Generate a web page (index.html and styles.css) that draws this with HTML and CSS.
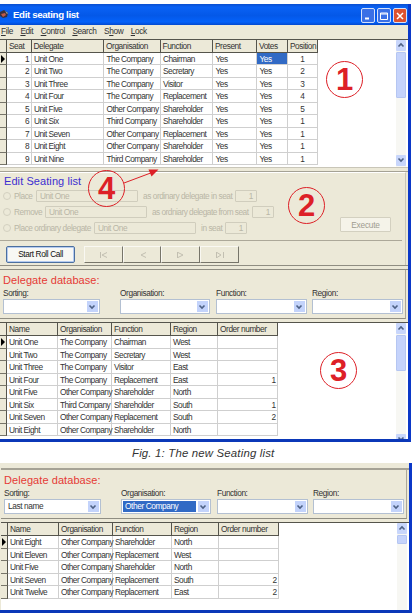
FILE: index.html
```html
<!DOCTYPE html>
<html lang="en">
<head>
    <meta charset="UTF-8">
    <meta name="viewport" content="width=device-width, initial-scale=1.0">
    <title>Edit seating list</title>
    <link rel="stylesheet" href="styles.css">
</head>
<body>
    <div class="window main-window">
        <div class="titlebar">
            <svg class="app-icon" width="10" height="11" viewBox="0 0 10 11">
                <path d="M0 3L4 1L8 4L7 8L3 9L0 7Z" fill="#39303c"/>
                <path d="M1 5L5 4L6 6L3 8Z" fill="#c05a4a"/>
                <path d="M5 2L8 4L7 5Z" fill="#a9b4a0"/>
            </svg>
            <span class="title">Edit seating list</span>
            <div class="win-buttons">
                <span class="win-btn"><svg width="12" height="12"><path d="M3 8.5H7" stroke="#fff" stroke-width="2"/></svg></span>
                <span class="win-btn"><svg width="12" height="12"><path d="M2.5 3H9.5V9.5H2.5ZM2.5 4H9.5" stroke="#fff" fill="none"/></svg></span>
                <span class="win-btn close"><svg width="12" height="12"><path d="M3 3L9 9M9 3L3 9" stroke="#fff" stroke-width="1.5"/></svg></span>
            </div>
        </div>
        <div class="menubar">
            <span><u>F</u>ile</span>
            <span><u>E</u>dit</span>
            <span><u>C</u>ontrol</span>
            <span><u>S</u>earch</span>
            <span>S<u>h</u>ow</span>
            <span><u>L</u>ock</span>
        </div>

        <div class="grid-area seats-area">
            <div class="grid seats">
                <b></b><b>Seat</b><b>Delegate</b><b>Organisation</b><b>Function</b><b>Present</b><b>Votes</b><b>Position</b>
                <i class="current"></i><span>1</span><span>Unit One</span><span>The Company</span><span>Chairman</span><span>Yes</span><span class="selected">Yes</span><span>1</span>
                <i></i><span>2</span><span>Unit Two</span><span>The Company</span><span>Secretary</span><span>Yes</span><span>Yes</span><span>2</span>
                <i></i><span>3</span><span>Unit Three</span><span>The Company</span><span>Visitor</span><span>Yes</span><span>Yes</span><span>3</span>
                <i></i><span>4</span><span>Unit Four</span><span>The Company</span><span>Replacement</span><span>Yes</span><span>Yes</span><span>4</span>
                <i></i><span>5</span><span>Unit Five</span><span>Other Company</span><span>Shareholder</span><span>Yes</span><span>Yes</span><span>5</span>
                <i></i><span>6</span><span>Unit Six</span><span>Third Company</span><span>Shareholder</span><span>Yes</span><span>Yes</span><span>1</span>
                <i></i><span>7</span><span>Unit Seven</span><span>Other Company</span><span>Replacement</span><span>Yes</span><span>Yes</span><span>1</span>
                <i></i><span>8</span><span>Unit Eight</span><span>Other Company</span><span>Shareholder</span><span>Yes</span><span>Yes</span><span>1</span>
                <i></i><span>9</span><span>Unit Nine</span><span>Third Company</span><span>Shareholder</span><span>Yes</span><span>Yes</span><span>1</span>
            </div>
            <div class="scrollbar">
                <span class="arrow"><svg width="10" height="10"><path d="M2.5 6.5L5 4L7.5 6.5" stroke="#4d6185" stroke-width="1.6" fill="none"/></svg></span>
                <span class="thumb seats-thumb"></span>
                <span class="arrow bottom"><svg width="10" height="10"><path d="M2.5 3.5L5 6L7.5 3.5" stroke="#4d6185" stroke-width="1.6" fill="none"/></svg></span>
            </div>
        </div>

        <div class="splitter"></div>

        <div class="edit-panel">
            <h2>Edit Seating list</h2>
            <div class="form-row">
                <span class="radio"></span>
                <span class="w-place">Place</span>
                <span class="field">Unit One</span>
                <span class="w-in">as ordinary delegate in seat</span>
                <span class="field num">1</span>
            </div>
            <div class="form-row">
                <span class="radio"></span>
                <span class="w-remove">Remove</span>
                <span class="field">Unit One</span>
                <span class="w-from">as ordniary delegate from seat</span>
                <span class="field num">1</span>
            </div>
            <div class="form-row">
                <span class="radio"></span>
                <span class="w-ordinary">Place ordinary delegate</span>
                <span class="field">Unit One</span>
                <span class="w-seat">in seat</span>
                <span class="field num">1</span>
                <span class="execute">Execute</span>
            </div>
            <div class="actions">
                <span class="start">Start Roll Call</span>
                <span class="nav"><svg width="10" height="8"><path d="M1.5 1V7M8 1.5L3 4L8 6.5" stroke="#c2bfb1" fill="none"/></svg></span>
                <span class="nav"><svg width="10" height="8"><path d="M8 1.5L3 4L8 6.5" stroke="#c2bfb1" fill="none"/></svg></span>
                <span class="nav"><svg width="10" height="8"><path d="M1.5 1V7M2 1.5L7 4L2 6.5" stroke="#c2bfb1" fill="none"/></svg></span>
                <span class="nav"><svg width="10" height="8"><path d="M1.5 1V7M2 1.5L6 4L2 6.5M8.5 1V7" stroke="#c2bfb1" fill="none"/></svg></span>
            </div>
        </div>

        <div class="splitter low"></div>

        <div class="filter-panel">
            <h2>Delegate database:</h2>
            <div class="filters">
                <div>Sorting:<p class="combo"><span></span><em><svg width="10" height="10"><path d="M2.5 3.5L5 6L7.5 3.5" stroke="#4d6185" stroke-width="1.6" fill="none"/></svg></em></p></div>
                <div>Organisation:<p class="combo"><span></span><em><svg width="10" height="10"><path d="M2.5 3.5L5 6L7.5 3.5" stroke="#4d6185" stroke-width="1.6" fill="none"/></svg></em></p></div>
                <div>Function:<p class="combo"><span></span><em><svg width="10" height="10"><path d="M2.5 3.5L5 6L7.5 3.5" stroke="#4d6185" stroke-width="1.6" fill="none"/></svg></em></p></div>
                <div>Region:<p class="combo"><span></span><em><svg width="10" height="10"><path d="M2.5 3.5L5 6L7.5 3.5" stroke="#4d6185" stroke-width="1.6" fill="none"/></svg></em></p></div>
            </div>
        </div>

        <div class="grid-area delegates-area">
            <div class="grid delegates">
                <b></b><b>Name</b><b>Organisation</b><b>Function</b><b>Region</b><b>Order number</b>
                <i class="current"></i><span>Unit One</span><span>The Company</span><span>Chairman</span><span>West</span><span></span>
                <i></i><span>Unit Two</span><span>The Company</span><span>Secretary</span><span>West</span><span></span>
                <i></i><span>Unit Three</span><span>The Company</span><span>Visitor</span><span>East</span><span></span>
                <i></i><span>Unit Four</span><span>The Company</span><span>Replacement</span><span>East</span><span>1</span>
                <i></i><span>Unit Five</span><span>Other Company</span><span>Shareholder</span><span>North</span><span></span>
                <i></i><span>Unit Six</span><span>Third Company</span><span>Shareholder</span><span>South</span><span>1</span>
                <i></i><span>Unit Seven</span><span>Other Company</span><span>Replacement</span><span>South</span><span>2</span>
                <i></i><span>Unit Eight</span><span>Other Company</span><span>Shareholder</span><span>North</span><span></span>
            </div>
            <div class="scrollbar">
                <span class="arrow"><svg width="10" height="10"><path d="M2.5 6.5L5 4L7.5 6.5" stroke="#4d6185" stroke-width="1.6" fill="none"/></svg></span>
                <span class="thumb delegates-thumb"></span>
                <span class="arrow bottom cut"><svg width="10" height="5"><path d="M2.5 3.5L5 6L7.5 3.5" stroke="#4d6185" stroke-width="1.6" fill="none"/></svg></span>
            </div>
        </div>
    </div>

    <p class="caption">Fig. 1: The new Seating list</p>

    <div class="window second-window">
        <div class="splitter low"></div>
        <div class="filter-panel">
            <h2>Delegate database:</h2>
            <div class="filters">
                <div>Sorting:<p class="combo"><span>Last name</span><em><svg width="10" height="10"><path d="M2.5 3.5L5 6L7.5 3.5" stroke="#4d6185" stroke-width="1.6" fill="none"/></svg></em></p></div>
                <div>Organisation:<p class="combo"><span class="selected">Other Company</span><em><svg width="10" height="10"><path d="M2.5 3.5L5 6L7.5 3.5" stroke="#4d6185" stroke-width="1.6" fill="none"/></svg></em></p></div>
                <div>Function:<p class="combo"><span></span><em><svg width="10" height="10"><path d="M2.5 3.5L5 6L7.5 3.5" stroke="#4d6185" stroke-width="1.6" fill="none"/></svg></em></p></div>
                <div>Region:<p class="combo"><span></span><em><svg width="10" height="10"><path d="M2.5 3.5L5 6L7.5 3.5" stroke="#4d6185" stroke-width="1.6" fill="none"/></svg></em></p></div>
            </div>
        </div>
        <div class="grid-area delegates-area">
            <div class="grid delegates">
                <b></b><b>Name</b><b>Organisation</b><b>Function</b><b>Region</b><b>Order number</b>
                <i class="current"></i><span>Unit Eight</span><span>Other Company</span><span>Shareholder</span><span>North</span><span></span>
                <i></i><span>Unit Eleven</span><span>Other Company</span><span>Replacement</span><span>West</span><span></span>
                <i></i><span>Unit Five</span><span>Other Company</span><span>Shareholder</span><span>North</span><span></span>
                <i></i><span>Unit Seven</span><span>Other Company</span><span>Replacement</span><span>South</span><span>2</span>
                <i></i><span>Unit Twelve</span><span>Other Company</span><span>Replacement</span><span>East</span><span>2</span>
            </div>
            <div class="scrollbar">
                <span class="arrow"><svg width="10" height="10"><path d="M2.5 6.5L5 4L7.5 6.5" stroke="#4d6185" stroke-width="1.6" fill="none"/></svg></span>
                <span class="thumb short-thumb"></span>
            </div>
        </div>
    </div>

    <!-- numbered callouts -->
    <svg class="pointer" width="40" height="20" viewBox="0 0 40 20">
        <path d="M0 16L28 5.5" stroke="#dd2027" fill="none"/>
        <path d="M34.5 2.5L24.5 2.5L27.5 9.5Z" fill="#dd2027"/>
    </svg>
    <div class="callout one">1</div>
    <div class="callout two">2</div>
    <div class="callout three">3</div>
    <div class="callout four">4</div>
</body>
</html>
```

FILE: styles.css
```css
* {
    box-sizing: border-box;
}
body {
    margin: 0;
    padding-top: 4px;
    width: 415px;
    height: 613px;
    overflow: hidden;
    position: relative;
    background-color: #fff;
    font-family: "Liberation Sans", Arial, sans-serif;
    font-size: 8.3px;
    letter-spacing: -0.5px;
    color: #333;
    white-space: nowrap;
}
svg {
    display: block;
}
.window {
    width: 411px;
    background-color: #ece9d8;
    border-right: 3px solid #0b38c8;
    border-bottom: 3px solid #0b38b8;
    overflow: hidden;
}
.main-window {
    height: 438px;
}
.second-window {
    height: 150px;
    width: 412px;
    padding-left: 1px;
}

/* title and menu */
.titlebar {
    height: 21px;
    width: 411px;
    display: flex;
    align-items: center;
    background: linear-gradient(#0a4fd0, #0a62f4 15%, #0458e8 55%, #0462fa 85%, #0349cf);
}
.title {
    margin-left: 3px;
    color: #fff;
    font-size: 9.7px;
    font-weight: bold;
    letter-spacing: -0.35px;
    flex: 1;
}
.win-buttons {
    display: flex;
    gap: 2px;
    margin: 2px 4px 0 0;
}
.win-btn {
    width: 14px;
    height: 15px;
    padding: 1px 0 0;
    border: 1px solid #d5e1fb;
    border-radius: 2px;
    background-color: #3a70e6;
}
.win-btn.close {
    background-color: #dc5230;
}
.menubar {
    height: 14px;
    display: flex;
    align-items: center;
    gap: 7.4px;
    padding: 0 0 2px 1px;
    letter-spacing: -0.35px;
}
.menubar u {
    text-underline-offset: 1px;
}

/* data grids */
.grid-area {
    display: flex;
    justify-content: space-between;
    background-color: #fff;
    border-top: 1px solid #55544c;
    padding-right: 2px;
}
.seats-area {
    height: 128px;
}
.delegates-area {
    height: 117px;
    margin-top: 3px;
}
.second-window .delegates-area {
    height: 89px;
}
.grid {
    display: grid;
    grid-template-rows: 12.5px;
    grid-auto-rows: 12.5px;
    line-height: 12px;
}
.seats {
    grid-template-columns: 7px 24.5px 72.5px 56.5px 52.5px 44px 31px 29.5px;
}
.delegates {
    grid-template-columns: 7px 51px 54px 59px 47px 60px;
    grid-template-rows: 13px;
}
.grid b {
    font-weight: normal;
    background-color: #ece9d8;
    border-right: 1px solid #55544c;
    border-bottom: 1px solid #55544c;
    padding-left: 2px;
    letter-spacing: -0.42px;
    line-height: 13px;
    overflow: hidden;
}
.grid i {
    background-color: #ece9d8;
    border-right: 1px solid #55544c;
    border-bottom: 1px solid #77756a;
}
.grid i.current::before {
    content: "";
    display: block;
    margin: 2px 0 0 1px;
    border-left: 4px solid #000;
    border-top: 4px solid transparent;
    border-bottom: 4px solid transparent;
}
.grid span {
    border-right: 1px solid #cfcfcf;
    border-bottom: 1px solid #cfcfcf;
    padding-left: 2px;
}
.seats span {
    padding-left: 2.5px;
}
.seats span:nth-child(8n+2),
.delegates span:nth-child(6n) {
    text-align: right;
    padding-right: 1.5px;
}
.seats span:nth-child(8n) {
    text-align: center;
    padding-left: 0;
}
.grid .selected,
.combo .selected {
    background-color: #316ac5;
    color: #fff;
}

.scrollbar {
    width: 10px;
    display: flex;
    flex-direction: column;
    background-color: #f7f7f3;
}
.arrow {
    height: 11px;
    background-color: #c8d6fb;
    border-radius: 1px;
}
.thumb {
    margin-top: 1px;
    background-color: #c5d3fb;
    border: 1px solid #b5c6f2;
    border-radius: 1px;
}
.seats-thumb {
    height: 46px;
}
.delegates-thumb {
    height: 36px;
}
.short-thumb {
    height: 9px;
}
.arrow.bottom {
    margin-top: auto;
    margin-bottom: 1px;
}
.arrow.cut {
    height: 5px;
    margin-bottom: 0;
    overflow: hidden;
}

.splitter {
    height: 5px;
    border-top: 1px solid #c9c6b8;
    border-bottom: 1px solid #a5a295;
}
.splitter.low {
    border-top-color: #8f8d82;
    border-bottom-color: #8f8d82;
}
.second-window .splitter {
    height: 7px;
    border-top: none;
    border-bottom: 2px solid #a5a295;
}

/* edit panel */
.edit-panel {
    height: 93px;
    border-top: 1px solid #fff;
    border-right: 1px solid #c9c6b8;
    margin-right: 2px;
    color: #b9b6a6;
}
h2 {
    margin: 0;
    font-size: 11px;
    font-weight: normal;
    line-height: 16px;
    padding-left: 4px;
}
.edit-panel h2 {
    color: #3c2fd0;
    letter-spacing: 0.08px;
    line-height: 17px;
    height: 15.5px;
}
.form-row {
    display: flex;
    align-items: center;
    height: 15.7px;
    padding-left: 3px;
    letter-spacing: -0.45px;
}
.radio {
    width: 8px;
    height: 8px;
    margin-right: 3px;
    border: 1px solid #d3d0c0;
    border-radius: 50%;
}
.field {
    width: 102px;
    height: 12px;
    line-height: 10px;
    padding-left: 3px;
    margin-right: 5px;
    border: 1px solid #d0cdbd;
    border-radius: 1px;
}
.field.num {
    width: 22px;
    text-align: right;
    padding-right: 3px;
    margin-right: 0;
}
.w-place {
    width: 22px;
}
.w-remove {
    width: 31px;
}
.w-ordinary {
    width: 80px;
}
.w-in {
    width: 92px;
}
.w-from {
    width: 100px;
    letter-spacing: -0.52px;
}
.w-seat {
    width: 24px;
}
.execute {
    margin: -6px 0 0 93px;
    width: 51px;
    height: 15px;
    line-height: 14px;
    text-align: center;
    background-color: #f5f3e9;
    border: 1px solid #d3d0c0;
    border-radius: 1px;
    color: #9f9c90;
    letter-spacing: -0.2px;
}
.actions {
    display: flex;
    margin: 4px 3px 0 0;
    padding: 5px 0 0 6px;
    border-top: 1px solid #aca899;
}
.start {
    width: 69px;
    height: 17px;
    margin-right: 9px;
    line-height: 15px;
    text-align: center;
    color: #111;
    background-color: #f8f8f4;
    border: 1px solid #4b6f9f;
    border-radius: 2px;
    box-shadow: inset 0 0 0 1px #b5cbf0;
    letter-spacing: -0.4px;
}
.nav {
    width: 38.7px;
    height: 17px;
    padding: 4px 0 0 14px;
    border: 1px solid #f9f8f2;
    border-right-color: #77756a;
    border-bottom-color: #77756a;
}

/* delegate filters */
.filter-panel {
    height: 49px;
    border-bottom: 1px solid #8f8d82;
    border-right: 1px solid #aca899;
    margin-right: 2px;
}
.filter-panel h2 {
    color: #e53a35;
    height: 18px;
    line-height: 20px;
    padding-left: 3px;
    letter-spacing: 0.07px;
}
.filters {
    display: grid;
    grid-template-columns: 97px 90px 91px 91px;
    padding-left: 3px;
    line-height: 11px;
    letter-spacing: -0.4px;
}
.filters div:nth-child(2) {
    margin-left: 20px;
    width: 90px;
}
.filters div:nth-child(3) {
    margin-left: 26px;
    width: 91px;
}
.filters div:nth-child(4) {
    margin-left: 31px;
    width: 91px;
}
.combo {
    margin: 0;
    height: 15px;
    display: flex;
    padding: 1px;
    background-color: #fff;
    border: 1px solid #b3c0d2;
}
.combo span {
    flex: 1;
    padding-left: 2px;
    margin-right: 2px;
}
.combo em {
    width: 11px;
    padding-top: 1px;
    background-color: #c3d3fb;
}

.caption {
    margin: 0;
    height: 21px;
    line-height: 22px;
    padding-left: 132px;
    font-size: 11.4px;
    font-style: italic;
    letter-spacing: 0.18px;
}

/* callouts lie over the windows */
.callout {
    position: absolute;
    width: 37px;
    height: 37px;
    border: 1px solid #dd2027;
    border-radius: 50%;
    color: #dd2027;
    font-size: 31px;
    font-weight: bold;
    line-height: 36px;
    letter-spacing: 0;
    text-align: center;
}
.one {
    left: 326px;
    top: 61px;
}
.two {
    left: 288px;
    top: 187px;
}
.three {
    left: 320px;
    top: 352px;
}
.four {
    left: 88px;
    top: 170px;
}
.pointer {
    position: absolute;
    left: 124px;
    top: 167px;
}
```
